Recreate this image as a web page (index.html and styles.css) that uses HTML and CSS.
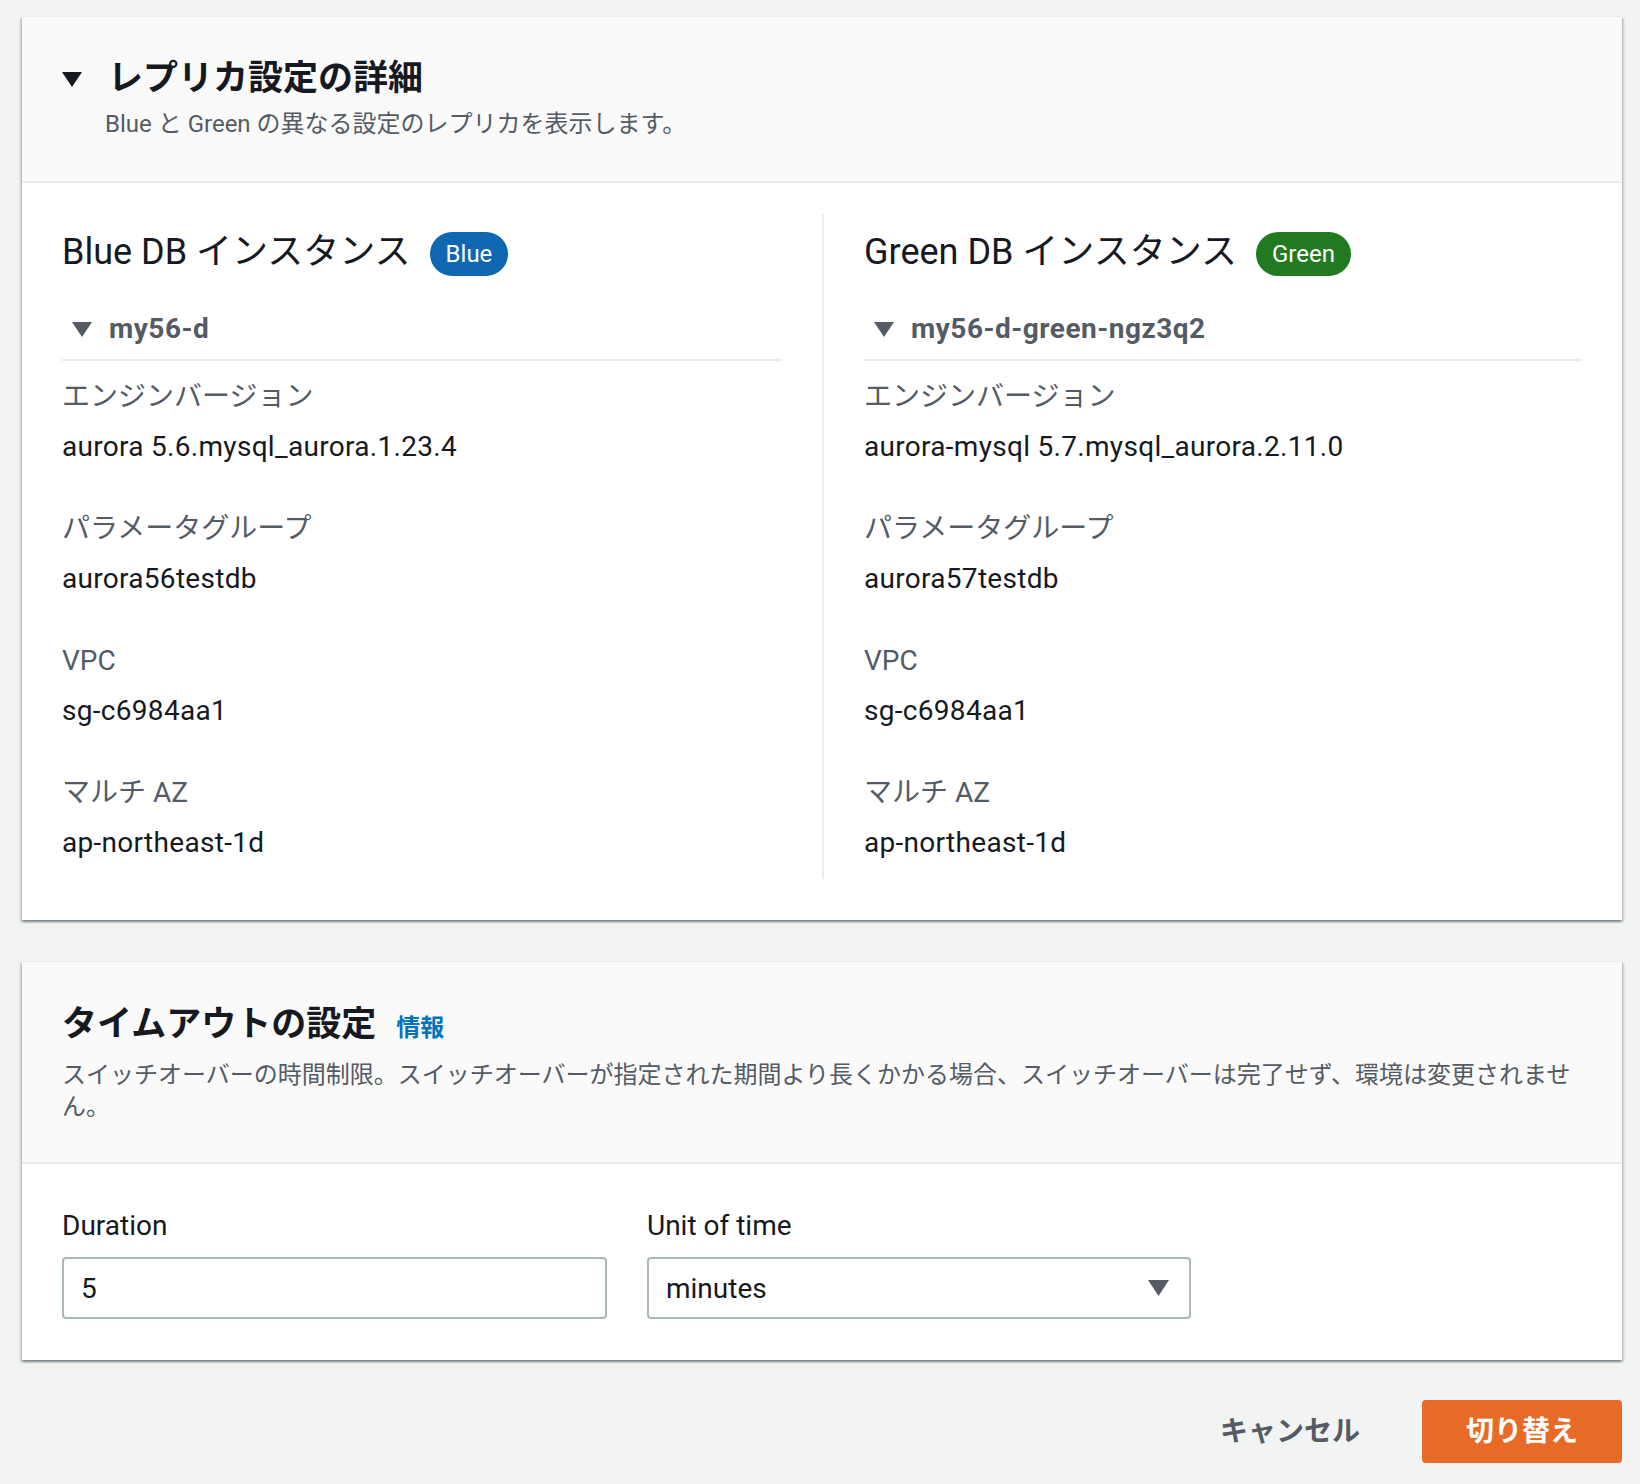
FILE: index.html
```html
<!DOCTYPE html>
<html lang="ja">
<head>
<meta charset="utf-8">
<title>レプリカ設定の詳細</title>
<link rel="stylesheet" href="styles.css">
</head>
<body>
<div class="page">
  <section class="panel">
    <header class="panel-head">
      <h2 class="title">
        <svg class="caret caret-title" width="20" height="15" viewBox="0 0 20 15"><path d="M0 0H20L10 15Z"/></svg>
        <span>レプリカ設定の詳細</span>
      </h2>
      <p class="desc desc-indent">Blue と Green の異なる設定のレプリカを表示します。</p>
    </header>
    <div class="panel-body cols">
      <div class="col">
        <div class="col-head">
          <h3 class="col-title">Blue DB インスタンス</h3>
          <span class="badge badge-blue">Blue</span>
        </div>
        <div class="expander">
          <svg class="caret caret-sub" width="20" height="15" viewBox="0 0 20 15"><path d="M0 0H20L10 15Z"/></svg>
          <span class="expander-text">my56-d</span>
        </div>
        <dl class="kv">
          <div class="kv-item"><dt>エンジンバージョン</dt><dd>aurora 5.6.mysql_aurora.1.23.4</dd></div>
          <div class="kv-item"><dt>パラメータグループ</dt><dd>aurora56testdb</dd></div>
          <div class="kv-item"><dt>VPC</dt><dd>sg-c6984aa1</dd></div>
          <div class="kv-item"><dt>マルチ AZ</dt><dd>ap-northeast-1d</dd></div>
        </dl>
      </div>
      <div class="col col-right">
        <div class="col-head">
          <h3 class="col-title">Green DB インスタンス</h3>
          <span class="badge badge-green">Green</span>
        </div>
        <div class="expander">
          <svg class="caret caret-sub" width="20" height="15" viewBox="0 0 20 15"><path d="M0 0H20L10 15Z"/></svg>
          <span class="expander-text">my56-d-green-ngz3q2</span>
        </div>
        <dl class="kv">
          <div class="kv-item"><dt>エンジンバージョン</dt><dd>aurora-mysql 5.7.mysql_aurora.2.11.0</dd></div>
          <div class="kv-item"><dt>パラメータグループ</dt><dd>aurora57testdb</dd></div>
          <div class="kv-item"><dt>VPC</dt><dd>sg-c6984aa1</dd></div>
          <div class="kv-item"><dt>マルチ AZ</dt><dd>ap-northeast-1d</dd></div>
        </dl>
      </div>
    </div>
  </section>

  <section class="panel panel-timeout">
    <header class="panel-head panel-head-2">
      <h2 class="title"><span>タイムアウトの設定</span><a class="info" href="#">情報</a></h2>
      <p class="desc desc-2">スイッチオーバーの時間制限。スイッチオーバーが指定された期間より長くかかる場合、スイッチオーバーは完了せず、環境は変更されません。</p>
    </header>
    <div class="panel-body form-body">
      <div class="field">
        <label class="field-label" for="duration">Duration</label>
        <input class="input" id="duration" type="text" value="5">
      </div>
      <div class="field">
        <span class="field-label">Unit of time</span>
        <div class="select">
          <span>minutes</span>
          <svg class="caret caret-select" width="21" height="16" viewBox="0 0 21 16"><path d="M0 0H21L10.5 16Z"/></svg>
        </div>
      </div>
    </div>
  </section>

  <div class="actions">
    <button class="btn btn-link" type="button">キャンセル</button>
    <button class="btn btn-primary" type="button">切り替え</button>
  </div>
</div>
</body>
</html>
```

FILE: styles.css
```css
* {
  box-sizing: border-box;
}

html, body {
  margin: 0;
  padding: 0;
  background: #f2f3f3;
}

body {
  font-family: "Roboto", "Noto Sans CJK JP", sans-serif;
  color: #16191f;
  width: 1640px;
  min-height: 1484px;
}

.page {
  padding: 16px 18px 20px 22px;
}

.panel {
  background: #ffffff;
  border-top: 1px solid #eaeded;
  box-shadow: 0 2px 2px 0 rgba(0, 28, 36, 0.3),
              2px 2px 2px 0 rgba(0, 28, 36, 0.15),
              -2px 2px 2px 0 rgba(0, 28, 36, 0.15);
}

.panel-timeout {
  margin-top: 41px;
}

.panel-head {
  background: #fafafa;
  border-bottom: 2px solid #eaeded;
  padding: 39px 40px 41px 40px;
}

.panel-head-2 {
  padding-top: 40px;
  padding-bottom: 39px;
}

.title {
  margin: 0;
  display: flex;
  align-items: baseline;
  font-size: 35px;
  line-height: 46px;
  font-weight: 700;
  color: #16191f;
}

.caret {
  display: block;
  flex: none;
}

.caret path {
  fill: currentColor;
}

.caret-title {
  color: #16191f;
  align-self: center;
  margin-right: 26px;
}

.info {
  font-size: 24px;
  font-weight: 700;
  color: #0073bb;
  text-decoration: none;
  margin-left: 20px;
}

.desc {
  margin: 6px 0 0 0;
  font-size: 24px;
  line-height: 32px;
  color: #545b64;
}

.desc-indent {
  margin-left: 43px;
}

.desc-2 {
  margin-top: 8px;
}

.panel-body {
  padding: 31px 40px 41px 40px;
}

.cols {
  display: grid;
  grid-template-columns: 1fr 1fr;
}

.col {
  padding: 0 40px 16px 0;
}

.col-right {
  border-left: 2px solid #eaeded;
  padding: 0 0 16px 40px;
}

.col-head {
  display: flex;
  align-items: center;
  height: 44px;
  margin-top: 16px;
}

.col-title {
  margin: 0 19px 0 0;
  font-size: 36px;
  line-height: 44px;
  font-weight: 400;
  color: #16191f;
}

.badge {
  display: inline-flex;
  align-items: center;
  height: 44px;
  margin-top: 4px;
  padding: 0 16px;
  border-radius: 22px;
  color: #ffffff;
  font-size: 24px;
  font-weight: 400;
}

.badge-blue {
  background: #0f67b2;
}

.badge-green {
  background: #217a1f;
}

.expander {
  display: flex;
  align-items: center;
  height: 51px;
  margin-top: 36px;
  padding-bottom: 11px;
  border-bottom: 2px solid #eaeded;
}

.caret-sub {
  color: #545b64;
  margin: 0 17px 0 10px;
}

.expander-text {
  font-size: 28px;
  line-height: 40px;
  font-weight: 700;
  letter-spacing: 0.5px;
  color: #545b64;
}

.kv {
  margin: 0;
  padding-top: 16px;
}

.kv-item {
  margin-bottom: 42px;
}

.kv-item:last-child {
  margin-bottom: 0;
}

.kv dt {
  font-size: 28px;
  line-height: 40px;
  color: #545b64;
  margin: 0 0 10px 0;
}

.kv dd {
  font-size: 28px;
  line-height: 40px;
  letter-spacing: 0.3px;
  color: #16191f;
  margin: 0;
}

.form-body {
  display: flex;
  gap: 40px;
  padding-top: 42px;
}

.field {
  width: 545px;
  display: flex;
  flex-direction: column;
}

.field-label {
  font-size: 28px;
  line-height: 40px;
  color: #16191f;
  margin-bottom: 11px;
}

.input,
.select {
  height: 62px;
  width: 100%;
  border: 2px solid #aab7b8;
  border-radius: 4px;
  background: #ffffff;
  font-family: "Roboto", "Noto Sans CJK JP", sans-serif;
  font-size: 28px;
  color: #16191f;
  padding: 0 17px;
  margin: 0;
  outline: none;
}

.select {
  width: 544px;
  display: flex;
  align-items: center;
  justify-content: space-between;
  padding-right: 20px;
}

.caret-select {
  color: #545b64;
}

.actions {
  display: flex;
  justify-content: flex-end;
  gap: 18px;
  margin-top: 40px;
}

.btn {
  height: 63px;
  padding: 0 42px;
  border: 2px solid transparent;
  border-radius: 4px;
  font-family: "Roboto", "Noto Sans CJK JP", sans-serif;
  font-size: 28px;
  font-weight: 700;
  line-height: 1;
  cursor: pointer;
}

.btn-link {
  background: transparent;
  color: #545b64;
}

.btn-primary {
  background: #e76b26;
  border-color: #e76b26;
  color: #ffffff;
}
```
